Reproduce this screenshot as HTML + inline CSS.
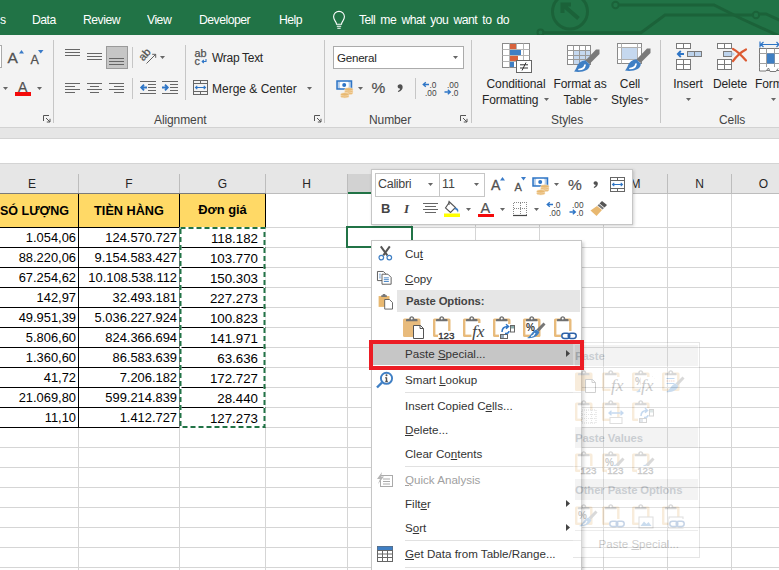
<!DOCTYPE html>
<html><head><meta charset="utf-8"><style>
*{box-sizing:border-box;margin:0;padding:0}
html,body{width:779px;height:570px;overflow:hidden;background:#fff;font-family:"Liberation Sans",sans-serif;}
#root{position:relative;width:779px;height:570px;overflow:hidden;background:#fff}
.a{position:absolute}
svg{position:absolute;overflow:visible}
.tab{position:absolute;top:12.3px;color:#fff;font-size:12.2px;letter-spacing:-0.5px;word-spacing:2.2px;line-height:16px;white-space:nowrap}
.rt{position:absolute;font-size:12px;color:#262626;white-space:nowrap;line-height:14px;letter-spacing:-0.1px}
.rc{position:absolute;font-size:12px;color:#262626;white-space:nowrap;line-height:16px;text-align:center;letter-spacing:-0.1px}
.vs{position:absolute;width:1px;background:#c6c6c6}
.ch{position:absolute;top:174px;height:19px;font-size:12px;line-height:20px;text-align:center;color:#262626}
.gl{position:absolute;background:#d5d5d5}
.bl{position:absolute;background:#000}
.cell{position:absolute;font-size:12.9px;line-height:20px;text-align:right;color:#000;white-space:nowrap}
.cg{position:absolute;font-size:13.3px;line-height:20px;text-align:right;color:#000;white-space:nowrap}
.hd{position:absolute;top:194px;height:33px;background:#ffd966;font-weight:bold;font-size:12.5px;line-height:33px;text-align:center;color:#000;white-space:nowrap}
.mi{position:absolute;left:405px;font-size:11.6px;color:#333;white-space:nowrap;line-height:16px}
.msep{position:absolute;left:405px;width:176px;height:1px;background:#e1e1e1}
u{text-decoration:underline;text-underline-offset:1px}
</style></head><body><div id="root">
<div class="a" style="left:0;top:0;width:779px;height:35px;background:#217346"></div>
<svg style="left:0;top:0" width="779" height="35" viewBox="0 0 779 35"><g fill="none" stroke="#1b6239" stroke-width="3" stroke-linecap="round">
<circle cx="570" cy="11.5" r="17.5" stroke-width="3"/><path d="M578.500 18.500 L563 5 M562.500 13 V4.500 H571" stroke-width="4" stroke-linecap="butt"/>
<circle cx="615.500" cy="5" r="3.200" stroke-width="2"/><path d="M619.500 5 H714 L742 19 L779 36"/>
<circle cx="540.500" cy="32.500" r="3" stroke-width="2"/><path d="M544 32.800 H641 L665 15 H752"/><circle cx="756" cy="15" r="3.200" stroke-width="2"/><path d="M759.500 14 H766 L779 20"/>
</g></svg>
<span class="tab" style="left:0px">s</span>
<span class="tab" style="left:32px">Data</span>
<span class="tab" style="left:83px">Review</span>
<span class="tab" style="left:147px">View</span>
<span class="tab" style="left:199px">Developer</span>
<span class="tab" style="left:279px">Help</span>
<span class="tab" style="left:359px">Tell me what you want to do</span>
<svg style="left:331px;top:10px" width="16" height="20" viewBox="0 0 16 20"><g fill="none" stroke="#fff" stroke-width="1.1">
<path d="M5.5 14.2 C5.5 11.5 2.6 10.4 2.6 6.8 A5.4 5.4 0 0 1 13.4 6.8 C13.4 10.4 10.5 11.5 10.5 14.2 Z"/><path d="M5.8 16.2 h4.4 M6.3 18.2 h3.4"/></g></svg>
<div class="a" style="left:0;top:35px;width:779px;height:92px;background:#f3f3f3"></div>
<div class="a" style="left:0;top:127px;width:779px;height:11px;background:#e6e6e6;border-top:1px solid #d2d2d2"></div>
<div class="a" style="left:0;top:138px;width:779px;height:26px;background:#fff;border-top:1px solid #d4d4d4;border-bottom:1px solid #d4d4d4"></div>
<div class="a" style="left:0;top:164px;width:779px;height:30px;background:#e6e6e6"></div>
<div class="a" style="left:-6px;top:45px;width:8px;height:23px;background:#fff;border:1px solid #ababab"></div>
<span class="a" style="left:7.500px;top:50px;font-size:15.500px;line-height:16px;color:#505050;-webkit-text-stroke:0.3px #505050">A</span>
<svg style="left:18.500px;top:49.500px" width="5" height="3.500"><path d="M0 3.500 H5 L2.500 0 Z" fill="#3a7bc8"/></svg>
<span class="a" style="left:30.500px;top:52.500px;font-size:12.500px;line-height:14px;color:#505050;-webkit-text-stroke:0.3px #505050">A</span>
<svg style="left:38px;top:50px" width="5.500" height="3.500"><path d="M0 0 H5.500 L2.750 3.500 Z" fill="#3a7bc8"/></svg>
<svg style="left:3px;top:87px" width="5" height="3.0"><path d="M0 0 H5 L2.5 3.0 Z" fill="#666"/></svg>
<span class="a" style="left:18px;top:79.500px;font-size:14px;line-height:14px;color:#505050;-webkit-text-stroke:0.2px #505050">A</span>
<div class="a" style="left:15px;top:92px;width:16px;height:4px;background:#f40a0a"></div>
<svg style="left:37px;top:87px" width="5" height="3.0"><path d="M0 0 H5 L2.5 3.0 Z" fill="#666"/></svg>
<svg style="left:43px;top:115px" width="8" height="8" viewBox="0 0 8 8"><path d="M0.5 6 V0.5 H6" fill="none" stroke="#555" stroke-width="1"/><path d="M3 3 L7 7 M7 3.800 V7 H3.800" fill="none" stroke="#555" stroke-width="1"/></svg>
<div class="vs" style="left:53px;top:40px;height:83px"></div>
<div class="a" style="left:106px;top:46px;width:22px;height:23px;background:#c6c6c6;border:1px solid #9a9a9a"></div>
<svg style="left:65px;top:49px" width="15" height="9"><rect x="0" y="0" width="15" height="1" fill="#666"/><rect x="0" y="3" width="15" height="1" fill="#666"/><rect x="0" y="6" width="15" height="1" fill="#666"/></svg>
<svg style="left:87px;top:53px" width="15" height="9"><rect x="0" y="0" width="15" height="1" fill="#666"/><rect x="0" y="3" width="15" height="1" fill="#666"/><rect x="0" y="6" width="15" height="1" fill="#666"/></svg>
<svg style="left:109px;top:58px" width="15" height="9"><rect x="0" y="0" width="15" height="1" fill="#666"/><rect x="0" y="3" width="15" height="1" fill="#666"/><rect x="0" y="6" width="15" height="1" fill="#666"/></svg>
<div class="vs" style="left:132px;top:47px;height:21px"></div>
<svg style="left:139px;top:47px" width="18" height="18" viewBox="0 0 18 18"><g transform="rotate(-48 6.500 8.500)"><text x="0.500" y="10.800" font-family="Liberation Sans" font-size="11" fill="#505050" stroke="#505050" stroke-width="0.250">ab</text></g><path d="M7.500 16.500 L16.500 7.500 M13.200 7.300 H16.700 V10.800" fill="none" stroke="#505050" stroke-width="0.900"/></svg>
<svg style="left:160px;top:56px" width="5" height="3.0"><path d="M0 0 H5 L2.5 3.0 Z" fill="#666"/></svg>
<svg style="left:65px;top:83px" width="15" height="12"><rect x="0" y="0" width="15" height="1" fill="#666"/><rect x="0" y="3" width="10" height="1" fill="#666"/><rect x="0" y="6" width="15" height="1" fill="#666"/><rect x="0" y="9" width="10" height="1" fill="#666"/></svg>
<svg style="left:87px;top:83px" width="15" height="12"><rect x="0.0" y="0" width="15" height="1" fill="#666"/><rect x="3.0" y="3" width="9" height="1" fill="#666"/><rect x="0.0" y="6" width="15" height="1" fill="#666"/><rect x="3.0" y="9" width="9" height="1" fill="#666"/></svg>
<svg style="left:109px;top:83px" width="15" height="12"><rect x="0" y="0" width="15" height="1" fill="#666"/><rect x="5" y="3" width="10" height="1" fill="#666"/><rect x="0" y="6" width="15" height="1" fill="#666"/><rect x="5" y="9" width="10" height="1" fill="#666"/></svg>
<div class="vs" style="left:132px;top:78px;height:21px"></div>
<svg style="left:140px;top:81px" width="16" height="13" viewBox="0 0 16 13"><g fill="#666"><rect x="0" y="0" width="16" height="1"/><rect x="8" y="3" width="8" height="1"/><rect x="8" y="6" width="8" height="1"/><rect x="8" y="9" width="8" height="1"/><rect x="0" y="12" width="16" height="1"/></g><path d="M7 6.500 H1.500 M4 3.600 L1.200 6.500 L4 9.400" fill="none" stroke="#2e75c6" stroke-width="1.800"/></svg>
<svg style="left:162px;top:81px" width="16" height="13" viewBox="0 0 16 13"><g fill="#666"><rect x="0" y="0" width="16" height="1"/><rect x="8" y="3" width="8" height="1"/><rect x="8" y="6" width="8" height="1"/><rect x="8" y="9" width="8" height="1"/><rect x="0" y="12" width="16" height="1"/></g><path d="M0 6.500 H5.500 M3 3.600 L5.800 6.500 L3 9.400" fill="none" stroke="#2e75c6" stroke-width="1.800"/></svg>
<div class="vs" style="left:185px;top:45px;height:55px"></div>
<svg style="left:193px;top:48px" width="16" height="18" viewBox="0 0 16 18"><text x="1.500" y="8.800" font-family="Liberation Sans" font-size="10.800" fill="#505050" stroke="#505050" stroke-width="0.250">ab</text><text x="1.500" y="16.800" font-family="Liberation Sans" font-size="10.800" fill="#505050" stroke="#505050" stroke-width="0.250">c</text><path d="M13 11 V13.500 H9.500 M10.800 12 L9.200 13.500 L10.800 15" fill="none" stroke="#2e75c6" stroke-width="1.100"/></svg>
<span class="rt" style="left:212px;top:51.300px;letter-spacing:-0.3px">Wrap Text</span>
<svg style="left:193px;top:80px" width="15" height="15" viewBox="0 0 15 15"><g fill="none" stroke="#666" stroke-width="1"><rect x="0.500" y="0.500" width="14" height="14"/><path d="M0.500 3.500 H14.500 M0.500 11.500 H14.500 M7.500 0.500 V3.500 M7.500 11.500 V14.500"/></g><path d="M2.500 7.500 H12.500 M4.300 5.800 L2.500 7.500 L4.300 9.200 M10.700 5.800 L12.500 7.500 L10.700 9.200" fill="none" stroke="#2e75c6" stroke-width="1.100"/></svg>
<span class="rt" style="left:212px;top:82.300px;letter-spacing:0">Merge &amp; Center</span>
<svg style="left:307px;top:87px" width="5" height="3.0"><path d="M0 0 H5 L2.5 3.0 Z" fill="#666"/></svg>
<span class="rt" style="left:154px;top:112.500px;color:#444">Alignment</span>
<svg style="left:314px;top:115px" width="8" height="8" viewBox="0 0 8 8"><path d="M0.5 6 V0.5 H6" fill="none" stroke="#555" stroke-width="1"/><path d="M3 3 L7 7 M7 3.800 V7 H3.800" fill="none" stroke="#555" stroke-width="1"/></svg>
<div class="vs" style="left:324px;top:40px;height:83px"></div>
<div class="a" style="left:333px;top:46px;width:131px;height:23px;background:#fff;border:1px solid #ababab"></div>
<span class="rt" style="left:337px;top:51px;font-size:11.600px;letter-spacing:-0.25px">General</span>
<svg style="left:453px;top:56px" width="5" height="3.0"><path d="M0 0 H5 L2.5 3.0 Z" fill="#666"/></svg>
<svg style="left:336px;top:80px" width="18" height="18" viewBox="0 0 18 18"><rect x="1" y="1" width="14.500" height="8" fill="#fff" stroke="#2e75c6" stroke-width="1.500"/><path d="M1 1 H4.500 C3.500 3 3.500 7 4.500 9 H1 Z M15.500 1 H12 C13 3 13 7 12 9 H15.500 Z" fill="#2e75c6" opacity="0.35"/><circle cx="8.200" cy="5" r="2" fill="#2e75c6"/><ellipse cx="12.8" cy="13" rx="4.200" ry="1.700" fill="#e8b870" stroke="#f7e3c4" stroke-width="0.600"/><ellipse cx="12.8" cy="11.2" rx="4.200" ry="1.700" fill="#e8b870" stroke="#f7e3c4" stroke-width="0.600"/><ellipse cx="12.8" cy="9.4" rx="4.200" ry="1.700" fill="#e8b870" stroke="#f7e3c4" stroke-width="0.600"/><ellipse cx="8.8" cy="16.2" rx="4.200" ry="1.700" fill="#e8b870" stroke="#f7e3c4" stroke-width="0.600"/><ellipse cx="8.8" cy="14.4" rx="4.200" ry="1.700" fill="#e8b870" stroke="#f7e3c4" stroke-width="0.600"/></svg>
<svg style="left:358px;top:87px" width="5" height="3.0"><path d="M0 0 H5 L2.5 3.0 Z" fill="#666"/></svg>
<span class="a" style="left:371.500px;top:80px;font-size:15.500px;line-height:16px;color:#505050;-webkit-text-stroke:0.2px #505050">%</span>
<svg style="left:396.5px;top:83.8px" width="6.300000000000001" height="8.4" viewBox="0 0 6 8"><path d="M2.900 0.200 C4.500 0.200 5.400 1.300 5.400 2.800 C5.400 5 3.900 6.900 1.200 7.700 L0.800 6.800 C2.100 6.200 2.900 5.300 3 4.300 C1.700 4.400 0.600 3.600 0.600 2.300 C0.600 1.100 1.600 0.200 2.900 0.200 Z" fill="#505050"/></svg>
<div class="vs" style="left:415px;top:78px;height:21px"></div>
<svg style="left:422px;top:81px" width="16" height="15" viewBox="0 0 16 15"><path d="M7 3.5 H1.5 M3.8 1.2 L1.2 3.5 L3.8 5.8" fill="none" stroke="#2e75c6" stroke-width="1.3"/><text x="7.5" y="6.5" font-family="Liberation Sans" font-size="8.300" fill="#444">.0</text><text x="3" y="14.5" font-family="Liberation Sans" font-size="8.300" fill="#444">.00</text></svg>
<svg style="left:444px;top:81px" width="16" height="15" viewBox="0 0 16 15"><text x="3" y="6.5" font-family="Liberation Sans" font-size="8.300" fill="#444">.00</text><path d="M0.5 11 H6 M3.8 8.7 L6.4 11 L3.8 13.3" fill="none" stroke="#2e75c6" stroke-width="1.3"/><text x="7.5" y="14.5" font-family="Liberation Sans" font-size="8.300" fill="#444">.0</text></svg>
<span class="rt" style="left:369px;top:112.500px;color:#444">Number</span>
<svg style="left:460px;top:115px" width="8" height="8" viewBox="0 0 8 8"><path d="M0.5 6 V0.5 H6" fill="none" stroke="#555" stroke-width="1"/><path d="M3 3 L7 7 M7 3.800 V7 H3.800" fill="none" stroke="#555" stroke-width="1"/></svg>
<div class="vs" style="left:471px;top:40px;height:83px"></div>
<svg style="left:501px;top:42px" width="32" height="32" viewBox="0 0 32 32"><rect x="1.5" y="1.5" width="27" height="24" fill="#fff" stroke="#8a8a8a"/>
<g stroke="#b5b5b5" stroke-width="1"><path d="M1.5 7.5 H28.5 M1.5 13.5 H28.5 M1.5 19.5 H28.5 M8.5 1.5 V25.5 M15.5 1.5 V25.5 M22.5 1.5 V25.5"/></g>
<rect x="9" y="2" width="6" height="5" fill="#d8623c"/><rect x="9" y="8" width="11" height="5" fill="#3f7fc4"/><rect x="9" y="14" width="8" height="5" fill="#d8623c"/><rect x="9" y="20" width="4" height="5" fill="#3f7fc4"/>
<rect x="15.500" y="18.5" width="15" height="12" fill="#fff" stroke="#666"/><path d="M19 22.8 H27 M19 26 H27 M25 20.5 L21 28.5" stroke="#333" stroke-width="1" fill="none"/></svg>
<div class="rc" style="left:476px;top:76px;width:80px">Conditional</div>
<div class="rt" style="left:482px;top:93px">Formatting</div>
<svg style="left:544px;top:98px" width="5" height="3.0"><path d="M0 0 H5 L2.5 3.0 Z" fill="#666"/></svg>
<svg style="left:566px;top:44px" width="34" height="32" viewBox="0 0 34 32"><rect x="1.5" y="1.500" width="23" height="19" fill="#c5d8ef" stroke="#8a8a8a"/><rect x="2" y="2" width="22" height="4" fill="#fff"/><rect x="2" y="2" width="5" height="18" fill="#fff"/>
<g stroke="#9a9a9a" stroke-width="1" fill="none"><path d="M1.5 6.5 H24.5 M1.5 11.5 H24.5 M1.5 15.5 H24.5 M7.5 1.5 V20.5 M13.5 1.5 V20.5 M19.5 1.500 V20.5"/></g><g transform="translate(13 8)"><path d="M17 -2.500 L20.500 -2.500 L20.500 2 L10.500 12 L6.500 8.500 Z" fill="#7a7a7a"/><path d="M6.300 8.300 L10.700 12.400 C11.500 18 3 21 -5 19.500 C-1.500 17 -3 9.500 6.300 8.300 Z" fill="#3f7fc4"/><path d="M0 17.500 C3 17.500 5.500 15.500 6 13" stroke="#fff" stroke-width="1.700" fill="none" stroke-linecap="round"/></g></svg>
<div class="rc" style="left:545px;top:76px;width:70px">Format as</div>
<div class="rt" style="left:563.500px;top:93px">Table</div>
<svg style="left:593px;top:98px" width="5" height="3.0"><path d="M0 0 H5 L2.5 3.0 Z" fill="#666"/></svg>
<svg style="left:616px;top:42px" width="34" height="32" viewBox="0 0 34 32"><rect x="1.5" y="1.5" width="24" height="20" fill="#fff" stroke="#8a8a8a"/><g stroke="#b0b0b0" stroke-width="1" fill="none"><path d="M1.5 5.5 H25.5 M1.5 17.5 H25.5 M5.5 1.5 V21.5 M21.5 1.5 V21.5"/></g><rect x="6" y="6" width="15" height="11" fill="#c5d8ef"/><g transform="translate(14 9)"><path d="M17 -2.500 L20.500 -2.500 L20.500 2 L10.500 12 L6.500 8.500 Z" fill="#7a7a7a"/><path d="M6.300 8.300 L10.700 12.400 C11.500 18 3 21 -5 19.500 C-1.500 17 -3 9.500 6.300 8.300 Z" fill="#3f7fc4"/><path d="M0 17.500 C3 17.500 5.500 15.500 6 13" stroke="#fff" stroke-width="1.700" fill="none" stroke-linecap="round"/></g></svg>
<div class="rc" style="left:605px;top:76px;width:50px;text-align:center">Cell</div>
<div class="rt" style="left:611px;top:93px">Styles</div>
<svg style="left:644px;top:98px" width="5" height="3.0"><path d="M0 0 H5 L2.5 3.0 Z" fill="#666"/></svg>
<span class="rt" style="left:551px;top:112.500px;color:#444">Styles</span>
<div class="vs" style="left:660px;top:40px;height:83px"></div>
<svg style="left:676px;top:43px" width="28" height="28" viewBox="0 0 28 28"><g fill="#fff" stroke="#7a7a7a" stroke-width="1"><rect x="0.500" y="0.500" width="14" height="5"/><path d="M7.500 0.500 V5.500"/><rect x="0.500" y="16.500" width="14" height="10"/><path d="M7.500 16.500 V26.500 M0.500 21.500 H14.500"/></g><rect x="11.500" y="8.500" width="14" height="5" fill="#bdd3ec" stroke="#7a7a7a"/><path d="M18.500 8.500 V13.500" stroke="#7a7a7a"/><path d="M8 11 H2 M4.800 8 L1.800 11 L4.800 14" fill="none" stroke="#2e75c6" stroke-width="1.800"/></svg>
<div class="rc" style="left:663px;top:76px;width:50px">Insert</div>
<svg style="left:686px;top:98px" width="5" height="3.0"><path d="M0 0 H5 L2.5 3.0 Z" fill="#666"/></svg>
<svg style="left:717px;top:43px" width="30" height="28" viewBox="0 0 30 28"><g fill="#fff" stroke="#7a7a7a" stroke-width="1"><rect x="0.500" y="0.500" width="14" height="5"/><path d="M7.500 0.500 V5.500"/><rect x="0.500" y="16.500" width="14" height="10"/><path d="M7.500 16.500 V26.500 M0.500 21.500 H14.500"/></g><rect x="6.500" y="8.500" width="8" height="5" fill="#bdd3ec" stroke="#7a7a7a"/><path d="M14.500 8.500 L18 11 L14.500 13.500 Z" fill="#bdd3ec"/><path d="M16 6 C20 8 25 13 29 17.500 M29 6.500 C24 9 19 14 16 18" stroke="#dc5a32" stroke-width="2.200" fill="none" stroke-linecap="round"/></svg>
<div class="rc" style="left:705px;top:76px;width:50px">Delete</div>
<svg style="left:728px;top:98px" width="5" height="3.0"><path d="M0 0 H5 L2.5 3.0 Z" fill="#666"/></svg>
<svg style="left:759px;top:41px" width="24" height="32" viewBox="0 0 24 32"><path d="M1 0.500 V6.500 M1.500 3.500 H24 M4.500 1 L1.800 3.500 L4.500 6 M17.500 1 L20 3.500 L17.500 6" stroke="#2e75c6" stroke-width="1.200" fill="none"/><rect x="0.500" y="7.500" width="24" height="22" fill="#fff" stroke="#7a7a7a"/><g stroke="#a0a0a0"><path d="M0.500 12.500 H24 M0.500 22.500 H24 M7.500 7.500 V26 M15.500 7.500 V26"/></g><rect x="8" y="12.500" width="7.500" height="10" fill="#3f7fc4"/><path d="M0.500 26.500 V30 H7 L9.500 27 L11 30.500 H17 L19 27.500" fill="#fff" stroke="#7a7a7a"/></svg>
<div class="rc" style="left:755px;top:76px;width:50px;text-align:left">Format</div>
<svg style="left:771px;top:98px" width="5" height="3.0"><path d="M0 0 H5 L2.5 3.0 Z" fill="#666"/></svg>
<span class="rt" style="left:719px;top:112.500px;color:#444">Cells</span>
<div class="ch" style="left:-14px;width:92px">E</div>
<div class="a" style="left:78px;top:174px;width:1px;height:19px;background:#bdbdbd"></div>
<div class="ch" style="left:79px;width:100px">F</div>
<div class="a" style="left:179px;top:174px;width:1px;height:19px;background:#bdbdbd"></div>
<div class="ch" style="left:180px;width:85px">G</div>
<div class="a" style="left:265px;top:174px;width:1px;height:19px;background:#bdbdbd"></div>
<div class="ch" style="left:266px;width:81px">H</div>
<div class="a" style="left:347px;top:174px;width:1px;height:19px;background:#bdbdbd"></div>
<div class="a" style="left:348px;top:174px;width:63px;height:20px;background:#d2d2d2;border-bottom:2px solid #217346"></div>
<div class="a" style="left:411px;top:174px;width:1px;height:19px;background:#bdbdbd"></div>
<div class="ch" style="left:412px;width:63px">J</div>
<div class="a" style="left:475px;top:174px;width:1px;height:19px;background:#bdbdbd"></div>
<div class="ch" style="left:476px;width:63px">K</div>
<div class="a" style="left:539px;top:174px;width:1px;height:19px;background:#bdbdbd"></div>
<div class="ch" style="left:540px;width:63px">L</div>
<div class="a" style="left:603px;top:174px;width:1px;height:19px;background:#bdbdbd"></div>
<div class="ch" style="left:604px;width:63px">M</div>
<div class="a" style="left:667px;top:174px;width:1px;height:19px;background:#bdbdbd"></div>
<div class="ch" style="left:668px;width:63px">N</div>
<div class="a" style="left:731px;top:174px;width:1px;height:19px;background:#bdbdbd"></div>
<div class="ch" style="left:732px;width:63px">O</div>
<div class="a" style="left:795px;top:174px;width:1px;height:19px;background:#bdbdbd"></div>
<div class="a" style="left:0;top:193px;width:779px;height:1px;background:#bdbdbd"></div>
<div class="a" style="left:348px;top:192px;width:64px;height:2px;background:#217346"></div>
<div class="gl" style="left:78px;top:194px;width:1px;height:376px"></div>
<div class="gl" style="left:179px;top:194px;width:1px;height:376px"></div>
<div class="gl" style="left:265px;top:194px;width:1px;height:376px"></div>
<div class="gl" style="left:347px;top:194px;width:1px;height:376px"></div>
<div class="gl" style="left:411px;top:194px;width:1px;height:376px"></div>
<div class="gl" style="left:475px;top:194px;width:1px;height:376px"></div>
<div class="gl" style="left:539px;top:194px;width:1px;height:376px"></div>
<div class="gl" style="left:603px;top:194px;width:1px;height:376px"></div>
<div class="gl" style="left:667px;top:194px;width:1px;height:376px"></div>
<div class="gl" style="left:731px;top:194px;width:1px;height:376px"></div>
<div class="gl" style="left:795px;top:194px;width:1px;height:376px"></div>
<div class="gl" style="left:0;top:227px;width:779px;height:1px"></div>
<div class="gl" style="left:0;top:247px;width:779px;height:1px"></div>
<div class="gl" style="left:0;top:267px;width:779px;height:1px"></div>
<div class="gl" style="left:0;top:287px;width:779px;height:1px"></div>
<div class="gl" style="left:0;top:307px;width:779px;height:1px"></div>
<div class="gl" style="left:0;top:327px;width:779px;height:1px"></div>
<div class="gl" style="left:0;top:347px;width:779px;height:1px"></div>
<div class="gl" style="left:0;top:367px;width:779px;height:1px"></div>
<div class="gl" style="left:0;top:387px;width:779px;height:1px"></div>
<div class="gl" style="left:0;top:407px;width:779px;height:1px"></div>
<div class="gl" style="left:0;top:427px;width:779px;height:1px"></div>
<div class="gl" style="left:0;top:447px;width:779px;height:1px"></div>
<div class="gl" style="left:0;top:467px;width:779px;height:1px"></div>
<div class="gl" style="left:0;top:487px;width:779px;height:1px"></div>
<div class="gl" style="left:0;top:507px;width:779px;height:1px"></div>
<div class="gl" style="left:0;top:527px;width:779px;height:1px"></div>
<div class="gl" style="left:0;top:547px;width:779px;height:1px"></div>
<div class="gl" style="left:0;top:567px;width:779px;height:1px"></div>
<div class="hd" style="left:0;width:78px;text-align:right;padding-right:12px;line-height:34px">SÓ LƯỢNG</div>
<div class="hd" style="left:79px;width:100px;line-height:34px;font-size:12.700px">TIÈN HÀNG</div>
<div class="hd" style="left:180px;width:85px;font-size:12.9px;line-height:31px">Đơn giá</div>
<div class="bl" style="left:0;top:193px;width:266px;height:1px;background:#7a7a7a"></div>
<div class="bl" style="left:0;top:227px;width:266px;height:1px"></div>
<div class="bl" style="left:0;top:247px;width:266px;height:1px"></div>
<div class="bl" style="left:0;top:267px;width:266px;height:1px"></div>
<div class="bl" style="left:0;top:287px;width:266px;height:1px"></div>
<div class="bl" style="left:0;top:307px;width:266px;height:1px"></div>
<div class="bl" style="left:0;top:327px;width:266px;height:1px"></div>
<div class="bl" style="left:0;top:347px;width:266px;height:1px"></div>
<div class="bl" style="left:0;top:367px;width:266px;height:1px"></div>
<div class="bl" style="left:0;top:387px;width:266px;height:1px"></div>
<div class="bl" style="left:0;top:407px;width:266px;height:1px"></div>
<div class="bl" style="left:0;top:427px;width:266px;height:1px"></div>
<div class="bl" style="left:78px;top:194px;width:1px;height:234px"></div>
<div class="bl" style="left:179px;top:194px;width:1px;height:234px"></div>
<div class="bl" style="left:265px;top:194px;width:1px;height:34px"></div>
<div class="cell" style="left:0;top:228px;width:76px">1.054,06</div>
<div class="cell" style="left:79px;top:228px;width:98px">124.570.727</div>
<div class="cg" style="left:180px;top:229px;width:78px">118.182</div>
<div class="cell" style="left:0;top:248px;width:76px">88.220,06</div>
<div class="cell" style="left:79px;top:248px;width:98px">9.154.583.427</div>
<div class="cg" style="left:180px;top:249px;width:78px">103.770</div>
<div class="cell" style="left:0;top:268px;width:76px">67.254,62</div>
<div class="cell" style="left:79px;top:268px;width:98px">10.108.538.112</div>
<div class="cg" style="left:180px;top:269px;width:78px">150.303</div>
<div class="cell" style="left:0;top:288px;width:76px">142,97</div>
<div class="cell" style="left:79px;top:288px;width:98px">32.493.181</div>
<div class="cg" style="left:180px;top:289px;width:78px">227.273</div>
<div class="cell" style="left:0;top:308px;width:76px">49.951,39</div>
<div class="cell" style="left:79px;top:308px;width:98px">5.036.227.924</div>
<div class="cg" style="left:180px;top:309px;width:78px">100.823</div>
<div class="cell" style="left:0;top:328px;width:76px">5.806,60</div>
<div class="cell" style="left:79px;top:328px;width:98px">824.366.694</div>
<div class="cg" style="left:180px;top:329px;width:78px">141.971</div>
<div class="cell" style="left:0;top:348px;width:76px">1.360,60</div>
<div class="cell" style="left:79px;top:348px;width:98px">86.583.639</div>
<div class="cg" style="left:180px;top:349px;width:78px">63.636</div>
<div class="cell" style="left:0;top:368px;width:76px">41,72</div>
<div class="cell" style="left:79px;top:368px;width:98px">7.206.182</div>
<div class="cg" style="left:180px;top:369px;width:78px">172.727</div>
<div class="cell" style="left:0;top:388px;width:76px">21.069,80</div>
<div class="cell" style="left:79px;top:388px;width:98px">599.214.839</div>
<div class="cg" style="left:180px;top:389px;width:78px">28.440</div>
<div class="cell" style="left:0;top:408px;width:76px">11,10</div>
<div class="cell" style="left:79px;top:408px;width:98px">1.412.727</div>
<div class="cg" style="left:180px;top:409px;width:78px">127.273</div>
<svg style="left:0;top:0" width="779" height="570"><rect x="180.500" y="228" width="84" height="199" fill="none" stroke="#fff" stroke-width="2"/><rect x="180.500" y="228" width="84" height="199" fill="none" stroke="#217346" stroke-width="2" stroke-dasharray="5 3"/></svg>
<div class="a" style="left:346px;top:226px;width:67px;height:22px;border:2px solid #217346"></div>
<div class="a" style="left:371px;top:169px;width:262px;height:56px;background:#fff;border:1px solid #c6c6c6;box-shadow:1px 1px 3px rgba(0,0,0,0.18)"></div>
<div class="a" style="left:375px;top:173px;width:65px;height:24px;background:#fff;border:1px solid #c6c6c6"></div>
<div class="a" style="left:439px;top:173px;width:46px;height:24px;background:#fff;border:1px solid #c6c6c6"></div>
<span class="rt" style="left:378px;top:177px;font-size:12.500px;color:#444;letter-spacing:-0.3px">Calibri</span>
<svg style="left:428px;top:183px" width="5" height="3.0"><path d="M0 0 H5 L2.5 3.0 Z" fill="#666"/></svg>
<span class="rt" style="left:442px;top:177px;font-size:12.5px;color:#444">11</span>
<svg style="left:474px;top:183px" width="5" height="3.0"><path d="M0 0 H5 L2.5 3.0 Z" fill="#666"/></svg>
<span class="a" style="left:491px;top:178px;font-size:14px;line-height:15px;color:#505050;-webkit-text-stroke:0.3px #505050">A</span>
<svg style="left:500px;top:177px" width="5" height="3.500"><path d="M0 3.500 H5 L2.500 0 Z" fill="#3a7bc8"/></svg>
<span class="a" style="left:514.500px;top:180.500px;font-size:11px;line-height:12px;color:#505050;-webkit-text-stroke:0.3px #505050">A</span>
<svg style="left:521px;top:177px" width="5" height="3.500"><path d="M0 0 H5 L2.500 3.500 Z" fill="#3a7bc8"/></svg>
<svg style="left:532px;top:176.5px" width="18" height="18" viewBox="0 0 18 18"><rect x="1" y="1" width="14.500" height="8" fill="#fff" stroke="#2e75c6" stroke-width="1.500"/><path d="M1 1 H4.500 C3.500 3 3.500 7 4.500 9 H1 Z M15.500 1 H12 C13 3 13 7 12 9 H15.500 Z" fill="#2e75c6" opacity="0.35"/><circle cx="8.200" cy="5" r="2" fill="#2e75c6"/><ellipse cx="12.8" cy="13" rx="4.200" ry="1.700" fill="#e8b870" stroke="#f7e3c4" stroke-width="0.600"/><ellipse cx="12.8" cy="11.2" rx="4.200" ry="1.700" fill="#e8b870" stroke="#f7e3c4" stroke-width="0.600"/><ellipse cx="12.8" cy="9.4" rx="4.200" ry="1.700" fill="#e8b870" stroke="#f7e3c4" stroke-width="0.600"/><ellipse cx="8.8" cy="16.2" rx="4.200" ry="1.700" fill="#e8b870" stroke="#f7e3c4" stroke-width="0.600"/><ellipse cx="8.8" cy="14.4" rx="4.200" ry="1.700" fill="#e8b870" stroke="#f7e3c4" stroke-width="0.600"/></svg>
<svg style="left:554px;top:183px" width="5" height="3.0"><path d="M0 0 H5 L2.5 3.0 Z" fill="#666"/></svg>
<span class="a" style="left:568px;top:177px;font-size:15.500px;line-height:16px;color:#505050;-webkit-text-stroke:0.2px #505050">%</span>
<svg style="left:592.8px;top:181.3px" width="5.4" height="7.2" viewBox="0 0 6 8"><path d="M2.900 0.200 C4.500 0.200 5.400 1.300 5.400 2.800 C5.400 5 3.900 6.900 1.200 7.700 L0.800 6.800 C2.100 6.200 2.900 5.300 3 4.300 C1.700 4.400 0.600 3.600 0.600 2.300 C0.600 1.100 1.600 0.200 2.900 0.200 Z" fill="#505050"/></svg>
<svg style="left:610px;top:177px" width="15" height="15" viewBox="0 0 15 15"><g fill="none" stroke="#666" stroke-width="1"><rect x="0.500" y="0.500" width="14" height="14"/><path d="M0.500 3.500 H14.500 M0.500 11.500 H14.500 M7.500 0.500 V3.500 M7.500 11.500 V14.500"/></g><path d="M2.500 7.500 H12.500 M4.300 5.800 L2.500 7.500 L4.300 9.200 M10.700 5.800 L12.500 7.500 L10.700 9.200" fill="none" stroke="#2e75c6" stroke-width="1.100"/></svg>
<span class="a" style="left:381px;top:201px;font-size:13px;line-height:16px;color:#444;font-weight:bold">B</span>
<span class="a" style="left:404px;top:201px;font-size:13px;line-height:16px;color:#444;font-style:italic;font-family:'Liberation Serif',serif;font-weight:bold">I</span>
<svg style="left:423px;top:203px" width="15" height="13"><g fill="#666"><rect x="0" y="0" width="15" height="1"/><rect x="2" y="3" width="11" height="1"/><rect x="0" y="6" width="15" height="1"/><rect x="2" y="9" width="11" height="1"/></g></svg>
<svg style="left:444px;top:200px" width="18" height="18" viewBox="0 0 18 18"><path d="M5.500 2 L11.500 7.500 L6.500 12.500 L1.500 8 Z" fill="#fff" stroke="#555" stroke-width="1.100"/><path d="M5 0.800 V5" stroke="#555" stroke-width="1.100"/><path d="M11.500 7.500 C14 8 15 10 14 12.500 C13 10.500 12.500 9.500 10 9 Z" fill="#3f7fc4"/><rect x="0" y="13.500" width="16" height="3.500" fill="#ffff00"/></svg>
<svg style="left:466px;top:208px" width="5" height="3.0"><path d="M0 0 H5 L2.5 3.0 Z" fill="#666"/></svg>
<span class="a" style="left:480.500px;top:200.500px;font-size:14.500px;line-height:15px;color:#505050;-webkit-text-stroke:0.2px #505050">A</span>
<div class="a" style="left:478px;top:213.500px;width:16px;height:3.500px;background:#f40a0a"></div>
<svg style="left:500px;top:208px" width="5" height="3.0"><path d="M0 0 H5 L2.5 3.0 Z" fill="#666"/></svg>
<svg style="left:513px;top:202px" width="14" height="14" viewBox="0 0 14 14"><g stroke="#8a8a8a" stroke-width="1" stroke-dasharray="1 1" fill="none" shape-rendering="crispEdges"><path d="M0.500 0.500 H13.500 V13 M0.500 0.500 V13 M7 0.500 V13 M0.500 6.500 H13.500"/></g><path d="M0 13.500 H14" stroke="#444" stroke-width="1.200"/></svg>
<svg style="left:534px;top:208px" width="5" height="3.0"><path d="M0 0 H5 L2.5 3.0 Z" fill="#666"/></svg>
<svg style="left:546px;top:201px" width="16" height="15" viewBox="0 0 16 15"><path d="M7 3.5 H1.5 M3.8 1.2 L1.2 3.5 L3.8 5.8" fill="none" stroke="#2e75c6" stroke-width="1.3"/><text x="7.5" y="6.5" font-family="Liberation Sans" font-size="8.300" fill="#444">.0</text><text x="3" y="14.5" font-family="Liberation Sans" font-size="8.300" fill="#444">.00</text></svg>
<svg style="left:569px;top:201px" width="16" height="15" viewBox="0 0 16 15"><text x="3" y="6.5" font-family="Liberation Sans" font-size="8.300" fill="#444">.00</text><path d="M0.5 11 H6 M3.8 8.7 L6.4 11 L3.8 13.3" fill="none" stroke="#2e75c6" stroke-width="1.3"/><text x="7.5" y="14.5" font-family="Liberation Sans" font-size="8.300" fill="#444">.0</text></svg>
<svg style="left:590px;top:200px" width="18" height="18" viewBox="0 0 18 18"><path d="M12 1 L17 5 L14.500 7.500 L9.500 3.500 Z" fill="#555"/><path d="M9 4 L14 8 L12.500 9.500 L7.500 5.500 Z" fill="#777"/><path d="M7 6 L12 10 L6.500 16 L0.500 10.500 Z" fill="#e8b870"/></svg>
<div class="a" style="left:371px;top:240px;width:211px;height:340px;background:#fff;border:1px solid #c6c6c6;box-shadow:2px 2px 3px rgba(0,0,0,0.18)"></div>
<span class="mi" style="top:246px;color:#333">Cu<u>t</u></span>
<span class="mi" style="top:271px;color:#333"><u>C</u>opy</span>
<div class="a" style="left:397px;top:290px;width:183px;height:22px;background:#e6e6e6"></div>
<span class="a" style="left:406px;top:293px;font-size:11.3px;font-weight:bold;color:#444;line-height:16px;white-space:nowrap;letter-spacing:-0.1px">Paste Options:</span>
<svg style="left:403.0px;top:316px" width="26" height="24" viewBox="0 0 26 24"><rect x="0" y="2.600" width="17.500" height="18.400" rx="1.500" fill="#e8bb7c"/><path d="M3 5.300 V3.700 Q3 2.900 3.800 2.900 H6.200 C6.200 -0.500 11.300 -0.500 11.300 2.900 H13.700 Q14.500 2.900 14.500 3.700 V5.300 Z" fill="#707070"/><circle cx="8.750" cy="2.400" r="1" fill="#fff"/><path d="M10.500 9.500 H17.500 L20.500 12.500 V22.500 H10.500 Z" fill="#fff" stroke="#555" stroke-width="1"/><path d="M17 9 V12.500 H20.500" fill="none" stroke="#555" stroke-width="1"/></svg>
<svg style="left:433.1px;top:316px" width="26" height="24" viewBox="0 0 26 24"><rect x="0" y="2.600" width="17.500" height="18.400" rx="1.500" fill="#e8bb7c"/><rect x="2.400" y="4.800" width="12.700" height="13.800" fill="#fff"/><path d="M3 5.300 V3.700 Q3 2.900 3.800 2.900 H6.200 C6.200 -0.500 11.300 -0.500 11.300 2.900 H13.700 Q14.500 2.900 14.500 3.700 V5.300 Z" fill="#707070"/><circle cx="8.750" cy="2.400" r="1" fill="#fff"/><rect x="5" y="15" width="18" height="9" fill="#fff"/><text x="5.300" y="22.800" font-family="Liberation Sans" font-size="9.800" fill="#333" stroke="#333" stroke-width="0.350" letter-spacing="-0.150">123</text></svg>
<svg style="left:463.2px;top:316px" width="26" height="24" viewBox="0 0 26 24"><rect x="0" y="2.600" width="17.500" height="18.400" rx="1.500" fill="#e8bb7c"/><rect x="2.400" y="4.800" width="12.700" height="13.800" fill="#fff"/><path d="M3 5.300 V3.700 Q3 2.900 3.800 2.900 H6.200 C6.200 -0.500 11.300 -0.500 11.300 2.900 H13.700 Q14.500 2.900 14.500 3.700 V5.300 Z" fill="#707070"/><circle cx="8.750" cy="2.400" r="1" fill="#fff"/><rect x="8.500" y="7" width="14" height="17" fill="#fff"/><text x="9" y="21.300" font-family="Liberation Serif" font-style="italic" font-size="17.500" fill="#444">fx</text></svg>
<svg style="left:493.3px;top:316px" width="26" height="24" viewBox="0 0 26 24"><rect x="0" y="2.600" width="17.500" height="18.400" rx="1.500" fill="#e8bb7c"/><rect x="2.400" y="4.800" width="12.700" height="13.800" fill="#fff"/><path d="M3 5.300 V3.700 Q3 2.900 3.800 2.900 H6.200 C6.200 -0.500 11.300 -0.500 11.300 2.900 H13.700 Q14.500 2.900 14.500 3.700 V5.300 Z" fill="#707070"/><circle cx="8.750" cy="2.400" r="1" fill="#fff"/><rect x="6" y="8" width="17" height="16" fill="#fff"/><rect x="17.500" y="9.500" width="4" height="6.500" fill="#fff" stroke="#666"/><rect x="18" y="10" width="3" height="2.500" fill="#8aa"/><rect x="7.500" y="18.500" width="7" height="4" fill="#fff" stroke="#666"/><rect x="8" y="19" width="3" height="3" fill="#9ab"/><path d="M9 16 C9 12 11 10.500 15 10.500 M13 8.300 L15.500 10.500 L13 12.700 M16 15 C16 17 14 17.500 12 17.500" fill="none" stroke="#2e75c6" stroke-width="1.500"/></svg>
<svg style="left:523.4px;top:316px" width="26" height="24" viewBox="0 0 26 24"><rect x="0" y="2.600" width="17.500" height="18.400" rx="1.500" fill="#e8bb7c"/><rect x="2.400" y="4.800" width="12.700" height="13.800" fill="#fff"/><path d="M3 5.300 V3.700 Q3 2.900 3.800 2.900 H6.200 C6.200 -0.500 11.300 -0.500 11.300 2.900 H13.700 Q14.500 2.900 14.500 3.700 V5.300 Z" fill="#707070"/><circle cx="8.750" cy="2.400" r="1" fill="#fff"/><rect x="3" y="6.500" width="11" height="9" fill="#fff"/><text x="3" y="15" font-family="Liberation Sans" font-size="10" font-weight="bold" fill="#333">%</text><path d="M20.500 6.500 L22.500 8.500 L16 15.500 L13.500 13.500 Z" fill="#767676"/><path d="M13.500 13.500 L16.500 16 C15 20.500 9 23 4 22 C8 20.500 8.500 15 13.500 13.500 Z" fill="#3f7fc4"/><path d="M8 20.500 C10 20 11.500 18.500 12 17" stroke="#fff" stroke-width="1.200" fill="none"/></svg>
<svg style="left:553.5px;top:316px" width="26" height="24" viewBox="0 0 26 24"><rect x="0" y="2.600" width="17.500" height="18.400" rx="1.500" fill="#e8bb7c"/><rect x="2.400" y="4.800" width="12.700" height="13.800" fill="#fff"/><path d="M3 5.300 V3.700 Q3 2.900 3.800 2.900 H6.200 C6.200 -0.500 11.300 -0.500 11.300 2.900 H13.700 Q14.500 2.900 14.500 3.700 V5.300 Z" fill="#707070"/><circle cx="8.750" cy="2.400" r="1" fill="#fff"/><rect x="7" y="15" width="17" height="9" fill="#fff"/><g fill="none" stroke="#2e62a8" stroke-width="1.500"><rect x="7.800" y="17.200" width="8" height="5.300" rx="2.650"/><rect x="14.200" y="17.200" width="8" height="5.300" rx="2.650"/></g></svg>
<div class="a" style="left:373px;top:344px;width:207px;height:21px;background:#c6c6c6"></div>
<span class="mi" style="top:346px;color:#333">Paste <u>S</u>pecial...</span>
<svg style="left:566px;top:350px" width="4" height="7"><path d="M0 0 L4 3.500 L0 7 Z" fill="#444"/></svg>
<span class="mi" style="top:372px;color:#333">Smart <u>L</u>ookup</span>
<div class="msep" style="top:392px"></div>
<span class="mi" style="top:398px;color:#333">Insert Copied C<u>e</u>lls...</span>
<span class="mi" style="top:422px;color:#333"><u>D</u>elete...</span>
<span class="mi" style="top:446px;color:#333">Clear Co<u>n</u>tents</span>
<div class="msep" style="top:466px"></div>
<span class="mi" style="top:472px;color:#a0a0a0"><u>Q</u>uick Analysis</span>
<span class="mi" style="top:496px;color:#333">Filt<u>e</u>r</span>
<svg style="left:566px;top:500px" width="4" height="7"><path d="M0 0 L4 3.500 L0 7 Z" fill="#444"/></svg>
<span class="mi" style="top:520px;color:#333">S<u>o</u>rt</span>
<svg style="left:566px;top:524px" width="4" height="7"><path d="M0 0 L4 3.500 L0 7 Z" fill="#444"/></svg>
<div class="msep" style="top:540px"></div>
<span class="mi" style="top:546px;color:#333"><u>G</u>et Data from Table/Range...</span>
<div class="msep" style="top:567px"></div>
<svg style="left:378px;top:246px" width="14" height="15" viewBox="0 0 14 15"><path d="M2.800 0.300 L9.300 9.300 M11.800 0.300 L5.300 9.300" stroke="#555" stroke-width="2" fill="none"/><circle cx="3.300" cy="11.600" r="2.300" fill="none" stroke="#3f7fc4" stroke-width="1.200"/><circle cx="11.300" cy="11.600" r="2.300" fill="none" stroke="#3f7fc4" stroke-width="1.200"/></svg>
<svg style="left:377px;top:271px" width="15.500" height="13.700" viewBox="0 0 17 15"><g fill="#fff" stroke="#555" stroke-width="1"><path d="M0.500 0.500 H7 L9.500 3 V10.500 H0.500 Z"/><path d="M5.500 3.500 H12 L15.500 7 V14.500 H5.500 Z"/></g><path d="M7.500 7.500 H13 M7.500 9.500 H13 M7.500 11.500 H13 M2.500 3.500 H4 M2.500 5.500 H4 M2.500 7.500 H4" stroke="#3f7fc4" stroke-width="1"/></svg>
<svg style="left:378px;top:293px" width="16" height="16.500" viewBox="0 0 18 19"><path d="M0.500 3.500 H13 V16 H0.500 Z" fill="#e8b870"/><path d="M3.500 4.500 V2.500 H5 C5 0.800 8.500 0.800 8.500 2.500 H10 V4.500 Z" fill="#777"/><path d="M7.500 7.500 H13 L16.500 11 V18.500 H7.500 Z" fill="#fff" stroke="#555"/></svg>
<svg style="left:376px;top:371px" width="18" height="18" viewBox="0 0 18 18"><circle cx="10.500" cy="7.300" r="5.600" fill="#fff" stroke="#3f7fc4" stroke-width="1.900"/><path d="M6 11.500 L1 16.500" stroke="#3f7fc4" stroke-width="2.400"/><path d="M10.500 6.500 V10.500 M9.300 6.800 H10.500 M9.300 10.500 H11.800" stroke="#505050" stroke-width="1.400" fill="none"/><circle cx="10.500" cy="4.300" r="1" fill="#505050"/></svg>
<svg style="left:376px;top:472px" width="18" height="16" viewBox="0 0 18 16"><rect x="4.500" y="3.500" width="12" height="11" fill="#fff" stroke="#aaa"/><path d="M7 7 H14 M7 9.500 H14 M7 12 H14" stroke="#aaa"/><path d="M6 0 L1 7 H4 L2 12 L8 4.500 H5 Z" fill="#b5b5b5"/></svg>
<svg style="left:377px;top:546px" width="17" height="16" viewBox="0 0 17 16"><rect x="0.500" y="0.500" width="15" height="15" fill="#fff" stroke="#666"/><rect x="0.500" y="0.500" width="15" height="3.500" fill="#3f7fc4"/><path d="M0.500 4.500 H15.500 M0.500 8 H15.500 M0.500 11.500 H15.500 M5.500 4.500 V15.500 M10.500 4.500 V15.500" stroke="#666" stroke-width="1"/></svg>
<div class="a" style="left:573px;top:342px;width:127px;height:216px;opacity:0.27">
<div class="a" style="left:0;top:0;width:127px;height:216px;background:#fff;border:1px solid #a0a0a0;border-left:none"></div>
<div class="a" style="left:2px;top:3px;width:123px;height:21px;background:#d4d4d4"></div>
<span class="a" style="left:2px;top:5.5px;font-size:11.300px;font-weight:bold;color:#3b4a5a;line-height:16px;white-space:nowrap;letter-spacing:-0.1px">Paste</span>
<svg style="left:2px;top:28px" width="26" height="24" viewBox="0 0 26 24"><rect x="0" y="2.600" width="17.500" height="18.400" rx="1.500" fill="#e8bb7c"/><path d="M3 5.300 V3.700 Q3 2.900 3.800 2.900 H6.200 C6.200 -0.500 11.300 -0.500 11.300 2.900 H13.700 Q14.500 2.900 14.500 3.700 V5.300 Z" fill="#707070"/><circle cx="8.750" cy="2.400" r="1" fill="#fff"/><path d="M10.500 9.500 H17.500 L20.500 12.500 V22.500 H10.500 Z" fill="#fff" stroke="#555" stroke-width="1"/><path d="M17 9 V12.500 H20.500" fill="none" stroke="#555" stroke-width="1"/></svg>
<svg style="left:29px;top:28px" width="26" height="24" viewBox="0 0 26 24"><rect x="0" y="2.600" width="17.500" height="18.400" rx="1.500" fill="#e8bb7c"/><rect x="2.400" y="4.800" width="12.700" height="13.800" fill="#fff"/><path d="M3 5.300 V3.700 Q3 2.900 3.800 2.900 H6.200 C6.200 -0.500 11.300 -0.500 11.300 2.900 H13.700 Q14.500 2.900 14.500 3.700 V5.300 Z" fill="#707070"/><circle cx="8.750" cy="2.400" r="1" fill="#fff"/><rect x="8.500" y="7" width="14" height="17" fill="#fff"/><text x="9" y="21.300" font-family="Liberation Serif" font-style="italic" font-size="17.500" fill="#444">fx</text></svg>
<svg style="left:59px;top:28px" width="26" height="24" viewBox="0 0 26 24"><rect x="0" y="2.600" width="17.500" height="18.400" rx="1.500" fill="#e8bb7c"/><rect x="2.400" y="4.800" width="12.700" height="13.800" fill="#fff"/><path d="M3 5.300 V3.700 Q3 2.900 3.800 2.900 H6.200 C6.200 -0.500 11.300 -0.500 11.300 2.900 H13.700 Q14.500 2.900 14.500 3.700 V5.300 Z" fill="#707070"/><circle cx="8.750" cy="2.400" r="1" fill="#fff"/><rect x="3" y="6.500" width="11" height="9" fill="#fff"/><text x="3" y="15" font-family="Liberation Sans" font-size="10" font-weight="bold" fill="#333">%</text><path d="M20.500 6.500 L22.500 8.500 L16 15.500 L13.500 13.500 Z" fill="#767676"/><path d="M13.500 13.500 L16.500 16 C15 20.500 9 23 4 22 C8 20.500 8.500 15 13.500 13.500 Z" fill="#3f7fc4"/><path d="M8 20.500 C10 20 11.500 18.500 12 17" stroke="#fff" stroke-width="1.200" fill="none"/><rect x="8.500" y="7" width="14" height="17" fill="#fff"/><text x="9" y="21.300" font-family="Liberation Serif" font-style="italic" font-size="17.500" fill="#444">fx</text></svg>
<svg style="left:88.5px;top:28px" width="26" height="24" viewBox="0 0 26 24"><rect x="0" y="2.600" width="17.500" height="18.400" rx="1.500" fill="#e8bb7c"/><rect x="2.400" y="4.800" width="12.700" height="13.800" fill="#fff"/><path d="M3 5.300 V3.700 Q3 2.900 3.800 2.900 H6.200 C6.200 -0.500 11.300 -0.500 11.300 2.900 H13.700 Q14.500 2.900 14.500 3.700 V5.300 Z" fill="#707070"/><circle cx="8.750" cy="2.400" r="1" fill="#fff"/><rect x="3.500" y="7" width="10" height="10" fill="#fff"/><path d="M4.500 8.500 H12.500 M4.500 13.500 H12.500" stroke="#2e75c6"/><path d="M4.500 11 H12.500" stroke="#d8623c" stroke-dasharray="1.500 0.700"/><path d="M20.500 6.500 L22.500 8.500 L16 15.500 L13.500 13.500 Z" fill="#767676"/><path d="M13.500 13.500 L16.500 16 C15 20.500 9 23 4 22 C8 20.500 8.500 15 13.500 13.500 Z" fill="#3f7fc4"/></svg>
<svg style="left:2px;top:58px" width="26" height="24" viewBox="0 0 26 24"><rect x="0" y="2.600" width="17.500" height="18.400" rx="1.500" fill="#e8bb7c"/><rect x="2.400" y="4.800" width="12.700" height="13.800" fill="#fff"/><path d="M3 5.300 V3.700 Q3 2.900 3.800 2.900 H6.200 C6.200 -0.500 11.300 -0.500 11.300 2.900 H13.700 Q14.500 2.900 14.500 3.700 V5.300 Z" fill="#707070"/><circle cx="8.750" cy="2.400" r="1" fill="#fff"/><rect x="7" y="10" width="14" height="13" fill="#fff" stroke="#777" stroke-dasharray="1 1"/><path d="M7 14.500 H21 M7 18.500 H21 M11.500 10 V23 M16.500 10 V23" stroke="#999" stroke-dasharray="1 1"/></svg>
<svg style="left:29px;top:58px" width="26" height="24" viewBox="0 0 26 24"><rect x="0" y="2.600" width="17.500" height="18.400" rx="1.500" fill="#e8bb7c"/><rect x="2.400" y="4.800" width="12.700" height="13.800" fill="#fff"/><path d="M3 5.300 V3.700 Q3 2.900 3.800 2.900 H6.200 C6.200 -0.500 11.300 -0.500 11.300 2.900 H13.700 Q14.500 2.900 14.500 3.700 V5.300 Z" fill="#707070"/><circle cx="8.750" cy="2.400" r="1" fill="#fff"/><path d="M7 13 H21 M9.500 10.800 L7 13 L9.500 15.200 M18.500 10.800 L21 13 L18.500 15.200" fill="none" stroke="#2e75c6" stroke-width="1.300"/><rect x="8" y="17.500" width="12" height="6" fill="#fff" stroke="#888"/></svg>
<svg style="left:59px;top:58px" width="26" height="24" viewBox="0 0 26 24"><rect x="0" y="2.600" width="17.500" height="18.400" rx="1.500" fill="#e8bb7c"/><rect x="2.400" y="4.800" width="12.700" height="13.800" fill="#fff"/><path d="M3 5.300 V3.700 Q3 2.900 3.800 2.900 H6.200 C6.200 -0.500 11.300 -0.500 11.300 2.900 H13.700 Q14.500 2.900 14.500 3.700 V5.300 Z" fill="#707070"/><circle cx="8.750" cy="2.400" r="1" fill="#fff"/><rect x="6" y="8" width="17" height="16" fill="#fff"/><rect x="17.500" y="9.500" width="4" height="6.500" fill="#fff" stroke="#666"/><rect x="18" y="10" width="3" height="2.500" fill="#8aa"/><rect x="7.500" y="18.500" width="7" height="4" fill="#fff" stroke="#666"/><rect x="8" y="19" width="3" height="3" fill="#9ab"/><path d="M9 16 C9 12 11 10.500 15 10.500 M13 8.300 L15.500 10.500 L13 12.700 M16 15 C16 17 14 17.500 12 17.500" fill="none" stroke="#2e75c6" stroke-width="1.500"/></svg>
<div class="a" style="left:2px;top:85px;width:123px;height:21px;background:#d4d4d4"></div>
<span class="a" style="left:2px;top:87.5px;font-size:11.300px;font-weight:bold;color:#3b4a5a;line-height:16px;white-space:nowrap;letter-spacing:-0.1px">Paste Values</span>
<svg style="left:2px;top:109px" width="26" height="24" viewBox="0 0 26 24"><rect x="0" y="2.600" width="17.500" height="18.400" rx="1.500" fill="#e8bb7c"/><rect x="2.400" y="4.800" width="12.700" height="13.800" fill="#fff"/><path d="M3 5.300 V3.700 Q3 2.900 3.800 2.900 H6.200 C6.200 -0.500 11.300 -0.500 11.300 2.900 H13.700 Q14.500 2.900 14.500 3.700 V5.300 Z" fill="#707070"/><circle cx="8.750" cy="2.400" r="1" fill="#fff"/><rect x="5" y="15" width="18" height="9" fill="#fff"/><text x="5.300" y="22.800" font-family="Liberation Sans" font-size="9.800" fill="#333" stroke="#333" stroke-width="0.350" letter-spacing="-0.150">123</text></svg>
<svg style="left:29px;top:109px" width="26" height="24" viewBox="0 0 26 24"><rect x="0" y="2.600" width="17.500" height="18.400" rx="1.500" fill="#e8bb7c"/><rect x="2.400" y="4.800" width="12.700" height="13.800" fill="#fff"/><path d="M3 5.300 V3.700 Q3 2.900 3.800 2.900 H6.200 C6.200 -0.500 11.300 -0.500 11.300 2.900 H13.700 Q14.500 2.900 14.500 3.700 V5.300 Z" fill="#707070"/><circle cx="8.750" cy="2.400" r="1" fill="#fff"/><rect x="3" y="6.500" width="11" height="9" fill="#fff"/><text x="3" y="15" font-family="Liberation Sans" font-size="10" font-weight="bold" fill="#333">%</text><path d="M20.500 6.500 L22.500 8.500 L16 15.500 L13.500 13.500 Z" fill="#767676"/><path d="M13.500 13.500 L16.500 16 C15 20.500 9 23 4 22 C8 20.500 8.500 15 13.500 13.500 Z" fill="#3f7fc4"/><path d="M8 20.500 C10 20 11.500 18.500 12 17" stroke="#fff" stroke-width="1.200" fill="none"/><rect x="5" y="15" width="18" height="9" fill="#fff"/><text x="5.300" y="22.800" font-family="Liberation Sans" font-size="9.800" fill="#333" stroke="#333" stroke-width="0.350" letter-spacing="-0.150">123</text></svg>
<svg style="left:59px;top:109px" width="26" height="24" viewBox="0 0 26 24"><rect x="0" y="2.600" width="17.500" height="18.400" rx="1.500" fill="#e8bb7c"/><rect x="2.400" y="4.800" width="12.700" height="13.800" fill="#fff"/><path d="M3 5.300 V3.700 Q3 2.900 3.800 2.900 H6.200 C6.200 -0.500 11.300 -0.500 11.300 2.900 H13.700 Q14.500 2.900 14.500 3.700 V5.300 Z" fill="#707070"/><circle cx="8.750" cy="2.400" r="1" fill="#fff"/><path d="M20.500 6.500 L22.500 8.500 L16 15.500 L13.500 13.500 Z" fill="#767676"/><path d="M13.500 13.500 L16.500 16 C15 20.500 9 23 4 22 C8 20.500 8.500 15 13.500 13.500 Z" fill="#3f7fc4"/><rect x="5" y="15" width="18" height="9" fill="#fff"/><text x="5.300" y="22.800" font-family="Liberation Sans" font-size="9.800" fill="#333" stroke="#333" stroke-width="0.350" letter-spacing="-0.150">123</text></svg>
<div class="a" style="left:2px;top:137px;width:123px;height:21px;background:#d4d4d4"></div>
<span class="a" style="left:2px;top:139.5px;font-size:11.300px;font-weight:bold;color:#3b4a5a;line-height:16px;white-space:nowrap;letter-spacing:-0.1px">Other Paste Options</span>
<svg style="left:2px;top:162px" width="26" height="24" viewBox="0 0 26 24"><rect x="0" y="2.600" width="17.500" height="18.400" rx="1.500" fill="#e8bb7c"/><rect x="2.400" y="4.800" width="12.700" height="13.800" fill="#fff"/><path d="M3 5.300 V3.700 Q3 2.900 3.800 2.900 H6.200 C6.200 -0.500 11.300 -0.500 11.300 2.900 H13.700 Q14.500 2.900 14.500 3.700 V5.300 Z" fill="#707070"/><circle cx="8.750" cy="2.400" r="1" fill="#fff"/><rect x="3" y="6.500" width="11" height="9" fill="#fff"/><text x="3" y="15" font-family="Liberation Sans" font-size="10" font-weight="bold" fill="#333">%</text><path d="M20.500 6.500 L22.500 8.500 L16 15.500 L13.500 13.500 Z" fill="#767676"/><path d="M13.500 13.500 L16.500 16 C15 20.500 9 23 4 22 C8 20.500 8.500 15 13.500 13.500 Z" fill="#3f7fc4"/><path d="M8 20.500 C10 20 11.500 18.500 12 17" stroke="#fff" stroke-width="1.200" fill="none"/></svg>
<svg style="left:29px;top:162px" width="26" height="24" viewBox="0 0 26 24"><rect x="0" y="2.600" width="17.500" height="18.400" rx="1.500" fill="#e8bb7c"/><rect x="2.400" y="4.800" width="12.700" height="13.800" fill="#fff"/><path d="M3 5.300 V3.700 Q3 2.900 3.800 2.900 H6.200 C6.200 -0.500 11.300 -0.500 11.300 2.900 H13.700 Q14.500 2.900 14.500 3.700 V5.300 Z" fill="#707070"/><circle cx="8.750" cy="2.400" r="1" fill="#fff"/><rect x="7" y="15" width="17" height="9" fill="#fff"/><g fill="none" stroke="#2e62a8" stroke-width="1.500"><rect x="7.800" y="17.200" width="8" height="5.300" rx="2.650"/><rect x="14.200" y="17.200" width="8" height="5.300" rx="2.650"/></g></svg>
<svg style="left:59px;top:162px" width="26" height="24" viewBox="0 0 26 24"><rect x="0" y="2.600" width="17.500" height="18.400" rx="1.500" fill="#e8bb7c"/><rect x="2.400" y="4.800" width="12.700" height="13.800" fill="#fff"/><path d="M3 5.300 V3.700 Q3 2.900 3.800 2.900 H6.200 C6.200 -0.500 11.300 -0.500 11.300 2.900 H13.700 Q14.500 2.900 14.500 3.700 V5.300 Z" fill="#707070"/><circle cx="8.750" cy="2.400" r="1" fill="#fff"/><rect x="7" y="13" width="14" height="11" fill="#fff" stroke="#888"/><path d="M8.500 22 L12 17.500 L14.500 20 L16.500 18 L19.500 22 Z" fill="#3f7fc4"/></svg>
<svg style="left:88.5px;top:162px" width="26" height="24" viewBox="0 0 26 24"><rect x="0" y="2.600" width="17.500" height="18.400" rx="1.500" fill="#e8bb7c"/><rect x="2.400" y="4.800" width="12.700" height="13.800" fill="#fff"/><path d="M3 5.300 V3.700 Q3 2.900 3.800 2.900 H6.200 C6.200 -0.500 11.300 -0.500 11.300 2.900 H13.700 Q14.500 2.900 14.500 3.700 V5.300 Z" fill="#707070"/><circle cx="8.750" cy="2.400" r="1" fill="#fff"/><rect x="7" y="13" width="14" height="11" fill="#fff" stroke="#888"/><path d="M8.500 22 L12 17.500 L14.500 20 L16.500 18 L19.500 22 Z" fill="#3f7fc4"/><rect x="7" y="15" width="17" height="9" fill="#fff"/><g fill="none" stroke="#2e62a8" stroke-width="1.500"><rect x="7.800" y="17.200" width="8" height="5.300" rx="2.650"/><rect x="14.200" y="17.200" width="8" height="5.300" rx="2.650"/></g></svg>
<div class="a" style="left:2px;top:188px;width:123px;height:1px;background:#bbb"></div>
<span class="a" style="left:25.5px;top:194px;font-size:11.600px;color:#444;line-height:16px;white-space:nowrap">Paste <u>S</u>pecial...</span>
</div>
<div class="a" style="left:369px;top:340px;width:215px;height:29.500px;border:4px solid #ec1c24"></div>
</div></body></html>
